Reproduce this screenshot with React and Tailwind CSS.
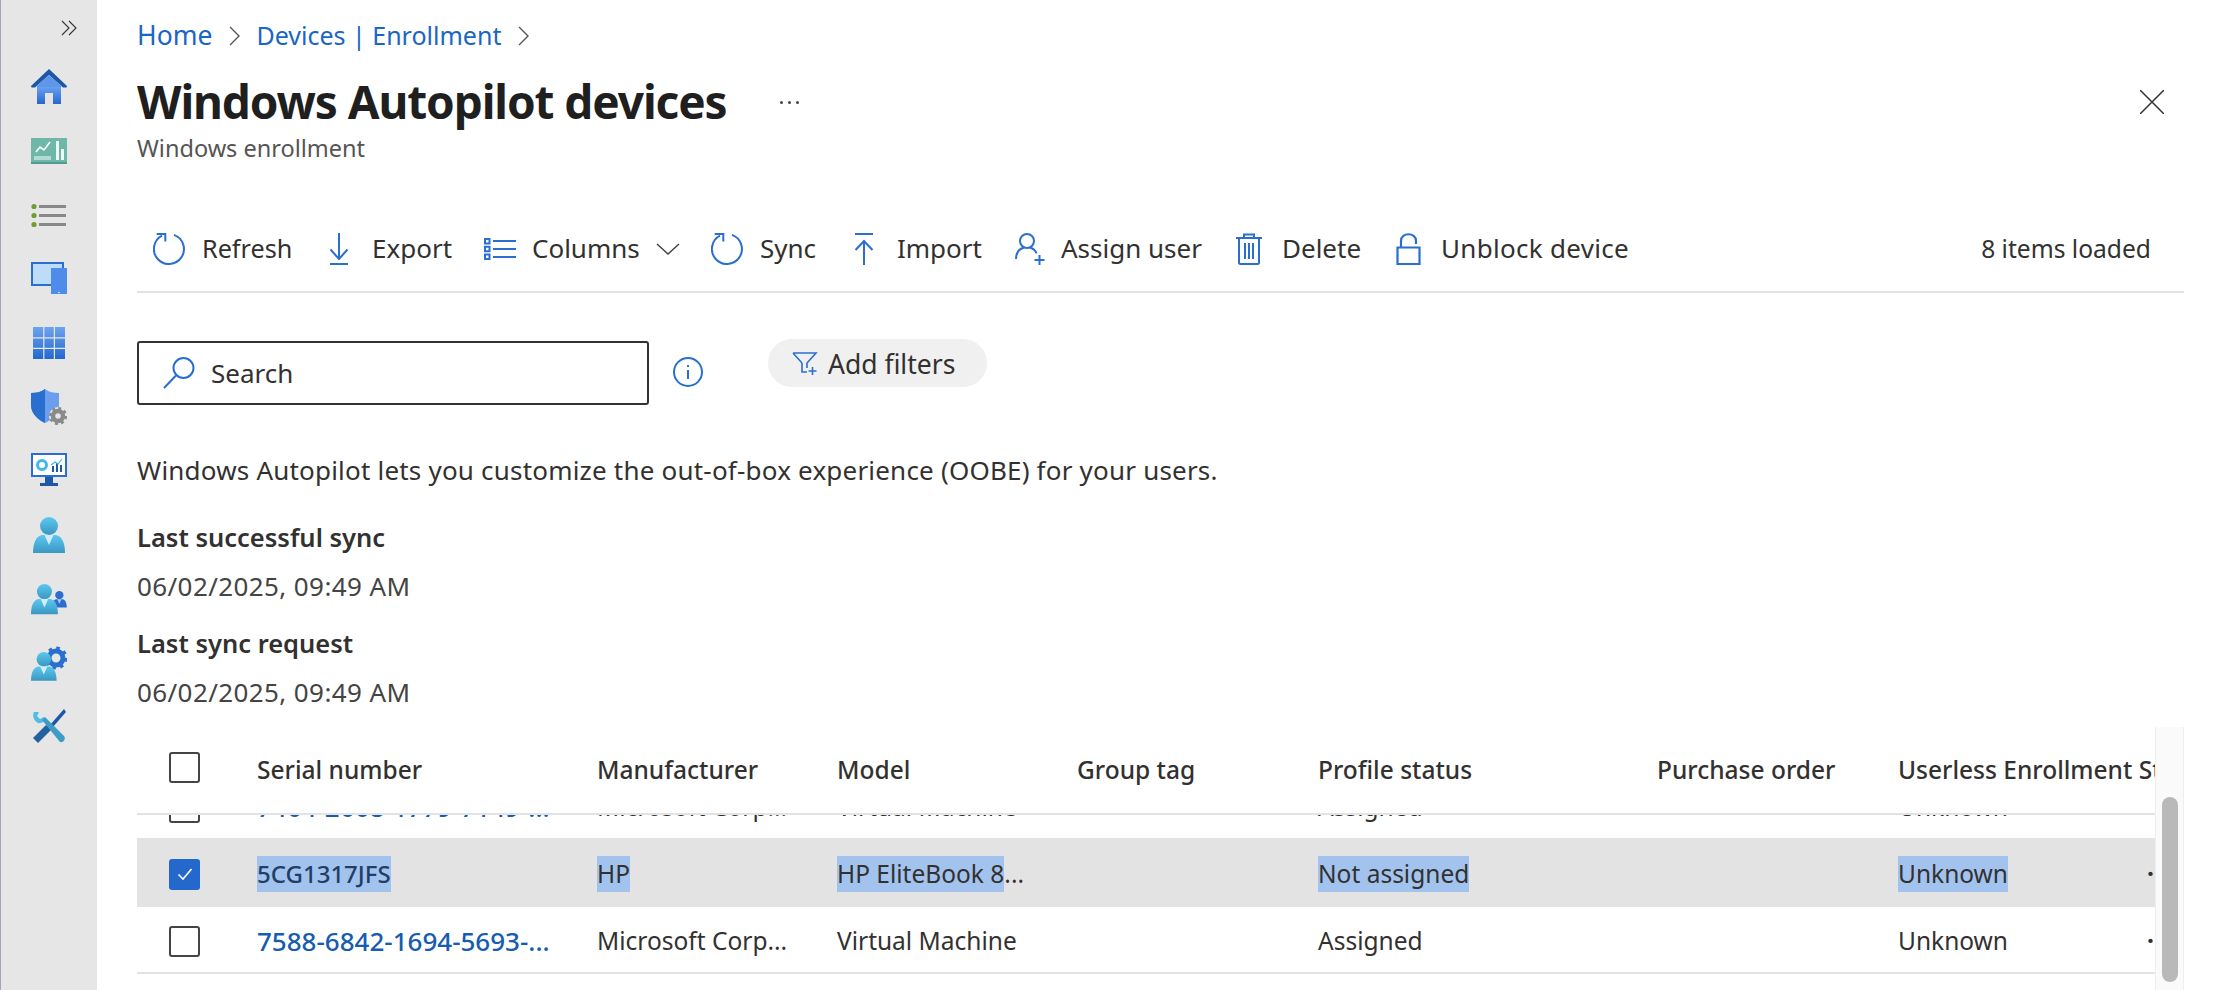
import React from 'react';

const blue = '#2a6fd0';

function Refresh({ className }) {
  return (
    <svg className={className} viewBox="0 0 32 32" fill="none" stroke={blue} strokeWidth="2">
      <path d="M21 1.900A15 15 0 1 1 9 2.700" />
      <path d="M3.700 1h8.600v7.500" />
    </svg>
  );
}

function SideIcon({ children }) {
  return (
    <div className="flex h-[64px] w-full items-center justify-center">
      <svg className="h-9 w-9" viewBox="0 0 36 36">{children}</svg>
    </div>
  );
}

function Person({ x = 0, y = 0, s = 1, fill = 'url(#personGrad)', tie = '#cfeefb' }) {
  return (
    <g transform={`translate(${x} ${y}) scale(${s})`}>
      <circle cx="16" cy="9" r="9" fill={fill} />
      <path d="M0 36c0-10 3-17 9-18h14c6 1 9 8 9 18z" fill={fill} />
      <path d="M11.500 18h9L16 28z" fill={tie} />
    </g>
  );
}

function Sidebar() {
  return (
    <aside className="flex h-[990px] w-[97px] shrink-0 flex-col border-l border-[#a5a5b5] bg-[#e6e6e6]">
      <div className="flex h-[55px] shrink-0 items-center justify-end pr-[20px]">
        <svg className="h-4 w-4" viewBox="0 0 16 16" fill="none" stroke="#333" strokeWidth="1.100">
          <path d="M1 1l7 7-7 7M8 1l7 7-7 7" />
        </svg>
      </div>
      <svg className="absolute h-0 w-0">
        <defs>
          <linearGradient id="blueGrad" x1="0" y1="0" x2="0" y2="1">
            <stop offset="0" stopColor="#6ea3f0" />
            <stop offset="1" stopColor="#2468cc" />
          </linearGradient>
          <linearGradient id="personGrad" x1="0" y1="0" x2="0" y2="1">
            <stop offset="0" stopColor="#5cc8ef" />
            <stop offset="1" stopColor="#3a97c2" />
          </linearGradient>
        </defs>
      </svg>
      {/* home */}
      <SideIcon>
        <path d="M6 17h24v18H6z" fill="url(#blueGrad)" />
        <path d="M14 24h8v11h-8z" fill="#e3e3e3" />
        <path d="M18 0L0 17l.5 1.500h3.500L18 6l14 12.500h3.500L36 17z" fill="#1c58a6" />
        <path d="M18 6L6 17v1h24v-1z" fill="#5c97ec" />
      </SideIcon>
      {/* analytics */}
      <SideIcon>
        <path d="M0 5h36v26H0z" fill="#6fb8a9" />
        <path d="M0 29h36v2H0z" fill="#4f9c8e" />
        <path d="M3 23h17v4H3z" fill="#b4dbd2" />
        <path d="M25 8h3v19h-3zM30 16h3v11h-3z" fill="#ecf8f5" />
        <path d="M5 19l4-5 4 3 6-8" fill="none" stroke="#fff" strokeWidth="1.600" />
      </SideIcon>
      {/* list */}
      <SideIcon>
        <path d="M8 8h27v3H8zM8 17h27v3H8zM8 26h27v3H8z" fill="#888" />
        <circle cx="3" cy="9.500" r="2.600" fill="#6d9e2f" />
        <circle cx="3" cy="18.500" r="2.600" fill="#6d9e2f" />
        <circle cx="3" cy="27.500" r="2.600" fill="#6d9e2f" />
      </SideIcon>
      {/* devices */}
      <SideIcon>
        <path d="M0 1h33v24H0z" fill="#2a6fd0" />
        <path d="M2 3h29v20H2z" fill="#bcdcf8" />
        <path d="M20 7h16v26H20z" fill="#4f8bea" />
        <circle cx="28" cy="31.500" r=".8" fill="#fff" />
      </SideIcon>
      {/* grid */}
      <SideIcon>
        <path d="M2 2h32v32H2z" fill="url(#blueGrad)" />
        <path d="M12.200 2h1.200v32h-1.200zM22.800 2H24v32h-1.200zM2 12.200h32v1.200H2zM2 22.800h32V24H2z" fill="#e6e6e6" />
      </SideIcon>
      {/* shield */}
      <SideIcon>
        <path d="M0 4c5 0 10-1 14-4 4 3 9 4 14 4v12c0 8-6 14-14 18C6 30 0 24 0 16z" fill="#6b9fee" />
        <path d="M0 4c5 0 10-1 14-4v34C6 30 0 24 0 16z" fill="#2a6fd0" />
        <circle cx="27" cy="27" r="9" fill="#e6e6e6" />
        <circle cx="27" cy="27" r="5" fill="none" stroke="#8a8a8a" strokeWidth="4.500" />
        <circle cx="27" cy="27" r="7.800" fill="none" stroke="#8a8a8a" strokeWidth="2.600" strokeDasharray="3 3.120" />
      </SideIcon>
      {/* monitor */}
      <SideIcon>
        <path d="M0 0h36v24H0z" fill="#2a6fd0" />
        <path d="M2 2h32v20H2z" fill="#fff" />
        <path d="M14 24h8v6h-8zM9 30h18v3H9z" fill="#1c58a6" />
        <circle cx="11" cy="12" r="4.500" fill="none" stroke="#43b7e8" strokeWidth="3" />
        <path d="M21 19v-6h2v6zM25 19v-9h2v9zM29 19v-7h2v7z" fill="#1c58a6" />
        <path d="M20 12l4-3 3 2 4-5" fill="none" stroke="#43b7e8" strokeWidth="1.200" />
      </SideIcon>
      {/* user */}
      <SideIcon>
        <Person x={2} />
      </SideIcon>
      {/* users */}
      <SideIcon>
        <Person x={21} y={10} s={0.46} fill="#2a6fd0" tie="#a9c9f3" />
        <Person x={0} y={3} s={0.84} />
      </SideIcon>
      {/* user + gear */}
      <SideIcon>
        <circle cx="25" cy="13" r="7" fill="none" stroke="#2a6fd0" strokeWidth="5" />
        <circle cx="25" cy="13" r="10" fill="none" stroke="#2a6fd0" strokeWidth="3" strokeDasharray="3.500 4.350" />
        <Person x={0} y={7} s={0.8} />
      </SideIcon>
      {/* tools */}
      <SideIcon>
        <path d="M33 0l-14 16 2.500 2.500L35 3z" fill="#1c58a6" />
        <path d="M15 16L2 29l5 5 14-14z" fill="#22629f" />
        <path d="M3 3l5 0-2 4 3 3 4-2c1 4-2 7-6 6C3 12 1 7 3 3z" fill="#4fbde8" />
        <path d="M11 11l3-3 19 19c2 2 0 7-4 6z" fill="#3f9cc6" />
      </SideIcon>
    </aside>
  );
}

const tools = [
  { label: 'Refresh', gap: 'ml-[16px]', tgap: 'ml-[17px] w-[90px] text-[25.200px]', icon: <Refresh className="h-8 w-8" /> },
  {
    label: 'Export', gap: 'ml-[38px]', tgap: 'ml-[24px] w-[79px]',
    icon: (
      <svg className="h-8 w-[18px]" viewBox="0 0 18 32" fill="none" stroke={blue} strokeWidth="2">
        <path d="M9 0v26M.5 16.500L9 26l8.500-9.500M0 31h18" />
      </svg>
    ),
  },
  {
    label: 'Columns', gap: 'ml-[33px]', tgap: 'ml-[16px] w-[109px]',
    icon: (
      <svg className="h-[22px] w-8" viewBox="0 0 32 22" fill="none" stroke={blue} strokeWidth="2">
        <path d="M1 1h4.500v4.500H1zM1 8.700h4.500v4.500H1zM1 16.500h4.500V21H1zM9 3h23M9 11h23M9 19h23" />
      </svg>
    ),
  },
  {
    label: 'Sync', gap: 'ml-[31px]', tgap: 'ml-[17px] w-[56px]', icon: <Refresh className="h-8 w-8" />,
  },
  {
    label: 'Import', gap: 'ml-[39px]', tgap: 'ml-[24px] w-[84px]',
    icon: (
      <svg className="h-8 w-[18px]" viewBox="0 0 18 32" fill="none" stroke={blue} strokeWidth="2">
        <path d="M0 1h18M9 32V8M.5 17L9 8l8.500 9" />
      </svg>
    ),
  },
  {
    label: 'Assign user', gap: 'ml-[34px]', tgap: 'ml-[16px] w-[140px]',
    icon: (
      <svg className="h-8 w-[30px]" viewBox="0 0 30 32" fill="none" stroke={blue} strokeWidth="2">
        <circle cx="12" cy="8" r="7" />
        <path d="M1 26c0-6 3-10 8-11.500M15 14.500c3 1 5.500 3 6.500 6M24.500 22v10M19.500 27h10" />
      </svg>
    ),
  },
  {
    label: 'Delete', gap: 'ml-[35px]', tgap: 'ml-[20px] w-[78px]',
    icon: (
      <svg className="h-8 w-[26px]" viewBox="0 0 26 32" fill="none" stroke={blue} strokeWidth="2">
        <path d="M0 5h26M8 5V1.500h10V5M3 5v24.500c0 1 .5 1.500 1.500 1.500h17c1 0 1.500-.5 1.500-1.500V5M9 10v16M13 10v16M17 10v16" />
      </svg>
    ),
  },
  {
    label: 'Unblock device', gap: 'ml-[36px]', tgap: 'ml-[20px] w-[188px] tracking-[0.300px]',
    icon: (
      <svg className="h-8 w-[25px]" viewBox="0 0 25 32" fill="none" stroke={blue} strokeWidth="2.200">
        <path d="M1.500 14.500h22V31h-22zM5 14V8c0-9 15-9 15 0v3" />
      </svg>
    ),
  },
];

const rows = [
  { serial: '7464-2668-1779-7149-...', maker: 'Microsoft Corp...', model: 'Virtual Machine', status: 'Assigned' },
  { serial: '5CG1317JFS', maker: 'HP', model: 'HP EliteBook 8', status: 'Not assigned', selected: true },
  { serial: '7588-6842-1694-5693-...', maker: 'Microsoft Corp...', model: 'Virtual Machine', status: 'Assigned' },
];

function Mark({ on, children }) {
  return on ? <span className="inline-block bg-[#a3c3ef] leading-[36px]">{children}</span> : children;
}

function Checkbox({ checked }) {
  if (checked) {
    return (
      <div className="flex h-[31px] w-[31px] items-center justify-center rounded-[3px] bg-[#2468cc]">
        <svg className="h-4 w-4" viewBox="0 0 16 16" fill="none" stroke="#fff" strokeWidth="1.600">
          <path d="M1.500 8.500l4.500 4.500 8.500-10" />
        </svg>
      </div>
    );
  }
  return <div className="h-[31px] w-[31px] rounded-[3px] border-2 border-[#444] bg-white" />;
}

function Row({ r }) {
  return (
    <div className={`flex h-[67px] items-center whitespace-nowrap border-b-2 border-[#e3e3e3] pt-[3px] ${r.selected ? 'bg-[#e3e3e3]' : ''}`}>
      <div className="w-[120px] shrink-0 pl-[32px]"><Checkbox checked={r.selected} /></div>
      <div className={`w-[340px] shrink-0 font-medium ${r.selected ? 'text-[24px] text-[#1f3f66]' : 'text-[26px] text-[#165cb0]'}`}><Mark on={r.selected}>{r.serial}</Mark></div>
      <div className="w-[240px] shrink-0"><Mark on={r.selected}>{r.maker}</Mark></div>
      <div className="w-[240px] shrink-0"><Mark on={r.selected}>{r.model}</Mark>{r.selected ? '...' : ''}</div>
      <div className="w-[241px] shrink-0" />
      <div className="w-[339px] shrink-0"><Mark on={r.selected}>{r.status}</Mark></div>
      <div className="w-[241px] shrink-0" />
      <div className="w-[249px] shrink-0"><Mark on={r.selected}>Unknown</Mark></div>
      <div className="shrink-0 font-bold">···</div>
    </div>
  );
}

export default function App() {
  return (
    <div className="relative flex h-[990px] w-[2224px] overflow-hidden bg-white font-['Noto_Sans',sans-serif] text-[26px] text-[#323130]">
      <Sidebar />
      <main className="min-w-0 flex-1 pl-[40px] pr-[40px]">
        {/* breadcrumb */}
        <nav className="flex h-[72px] items-center text-[25px] text-[#1a66c4]">
          <span className="text-[26.500px]">Home</span>
          <svg className="ml-[17px] mr-[15px] h-[20px] w-[12px]" viewBox="0 0 12 20" fill="none" stroke="#555" strokeWidth="1.400"><path d="M1 1l9 9-9 9" /></svg>
          <span>Devices | Enrollment</span>
          <svg className="ml-[17px] h-[20px] w-[12px]" viewBox="0 0 12 20" fill="none" stroke="#555" strokeWidth="1.400"><path d="M1 1l9 9-9 9" /></svg>
        </nav>

        {/* title */}
        <div className="flex h-[60px] items-center">
          <h1 className="pb-[2px] text-[46px] font-bold leading-none tracking-[-1.100px] text-[#1f1f1f]">Windows Autopilot devices</h1>
          <span className="ml-[53px] flex gap-[5px]">
            <i className="h-[3px] w-[3px] rounded-full bg-[#444]" />
            <i className="h-[3px] w-[3px] rounded-full bg-[#444]" />
            <i className="h-[3px] w-[3px] rounded-full bg-[#444]" />
          </span>
          <svg className="ml-auto mr-[20px] h-6 w-6" viewBox="0 0 24 24" fill="none" stroke="#333" strokeWidth="1.500"><path d="M0 0l24 24M24 0L0 24" /></svg>
        </div>
        <p className="h-[34px] text-[23.500px] leading-[32px] text-[#555]">Windows enrollment</p>

        {/* toolbar */}
        <div className="mt-[40px] flex h-[87px] items-center whitespace-nowrap border-b-2 border-[#e3e3e3]">
          {tools.map(t => (
            <React.Fragment key={t.label}>
              <span className={`${t.gap} shrink-0`}>{t.icon}</span>
              <span className={`${t.tgap} shrink-0`}>{t.label}</span>
              {t.label === 'Columns' && (
                <svg className="ml-[15px] h-3 w-6 shrink-0" viewBox="0 0 24 12" fill="none" stroke="#444" strokeWidth="1.500"><path d="M1 1l11 10L23 1" /></svg>
              )}
            </React.Fragment>
          ))}
          <span className="ml-auto mr-[33px] pt-[2px] text-[24.600px]">8 items loaded</span>
        </div>

        {/* search + filters */}
        <div className="mt-[48px] flex h-[66px] items-start">
          <div className="flex h-[64px] w-[512px] items-center rounded-[3px] border-2 border-[#333] pl-[24px]">
            <svg className="h-8 w-8" viewBox="0 0 32 32" fill="none" stroke={blue} strokeWidth="2">
              <circle cx="20.500" cy="11" r="10" />
              <path d="M13 18.500L1 31" />
            </svg>
            <span className="ml-[16px] pt-[1px]">Search</span>
          </div>
          <svg className="ml-[24px] mt-[16px] h-[30px] w-[30px]" viewBox="0 0 30 30" fill="none" stroke={blue} strokeWidth="2">
            <circle cx="15" cy="15" r="14" />
            <path d="M15 13v9M15 8v2" />
          </svg>
          <div className="-mt-[2px] ml-[65px] flex h-[48px] w-[219px] items-center rounded-full bg-[#f0f0f0] pl-[24px] pt-[4px]">
            <svg className="h-[26px] w-[26px]" viewBox="0 0 26 26" fill="none" stroke={blue} strokeWidth="1.600">
              <path d="M1 1h23l-9 10v5M10 11L1 1M10 11v9h5M20.500 15v8M16.500 19h8" />
            </svg>
            <span className="ml-[10px] text-[26.500px]">Add filters</span>
          </div>
        </div>

        {/* info text */}
        <p className="mt-[45px] h-[36px] leading-[36px] tracking-[0.200px]">Windows Autopilot lets you customize the out-of-box experience (OOBE) for your users.</p>
        <p className="mt-[31px] h-[36px] text-[25.500px] font-semibold leading-[36px]">Last successful sync</p>
        <p className="mt-[13px] h-[36px] leading-[36px] tracking-[0.400px] text-[#444]">06/02/2025, 09:49 AM</p>
        <p className="mt-[21px] h-[36px] text-[25.500px] font-semibold leading-[36px]">Last sync request</p>
        <p className="mt-[13px] h-[36px] leading-[36px] tracking-[0.400px] text-[#444]">06/02/2025, 09:49 AM</p>

        {/* table */}
        <div className="mt-[17px] flex h-[263px] text-[24.500px]">
          <div className="min-w-0 flex-1 overflow-hidden">
            <div className="flex h-[88px] items-center whitespace-nowrap border-b-2 border-[#e3e3e3] font-medium">
              <div className="-mt-[5px] w-[120px] shrink-0 pl-[32px]"><Checkbox /></div>
              <div className="w-[340px] shrink-0">Serial number</div>
              <div className="w-[240px] shrink-0">Manufacturer</div>
              <div className="w-[240px] shrink-0">Model</div>
              <div className="w-[241px] shrink-0">Group tag</div>
              <div className="w-[339px] shrink-0">Profile status</div>
              <div className="w-[241px] shrink-0">Purchase order</div>
              <div className="w-[240px] shrink-0">Userless Enrollment Status</div>
            </div>
            <div className="h-[175px] overflow-hidden">
              <div className="-mt-[42px]">
                {rows.map(r => <Row key={r.serial} r={r} />)}
              </div>
            </div>
          </div>
          <div className="w-[29px] shrink-0 border-x border-[#eee] bg-[#fafafa] pl-[6px] pt-[70px]">
            <div className="h-[185px] w-4 rounded-full bg-[#b9b9b9]" />
          </div>
        </div>
      </main>
    </div>
  );
}
